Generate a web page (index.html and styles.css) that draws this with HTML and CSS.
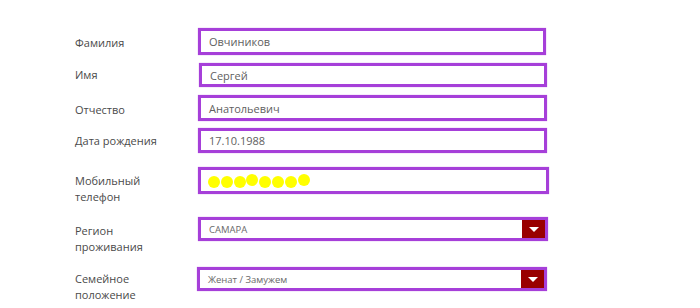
FILE: index.html
```html
<!DOCTYPE html>
<html lang="ru">

<head>
    <meta charset="UTF-8">
    <meta name="viewport" content="width=device-width, initial-scale=1.0">
    <title>Анкета</title>
    <link rel="stylesheet" href="styles.css">
</head>

<body>
    <div class="form">
        <div class="row">
            <div class="label">Фамилия</div>
            <div class="field">Овчиников</div>
        </div>
        <div class="row r-small">
            <div class="label">Имя</div>
            <div class="field f-small">Сергей</div>
        </div>
        <div class="row">
            <div class="label">Отчество</div>
            <div class="field f-mid">Анатольевич</div>
        </div>
        <div class="row r-date">
            <div class="label">Дата рождения</div>
            <div class="field f-date">17.10.1988</div>
        </div>
        <div class="row row-tall">
            <div class="label">Мобильный<br>телефон</div>
            <div class="field f-phone">
                <span class="dot"></span><span class="dot"></span><span class="dot"></span><span class="dot up"></span><span class="dot"></span><span class="dot"></span><span class="dot"></span><span class="dot up"></span>
            </div>
        </div>
        <div class="row row-tall">
            <div class="label">Регион<br>проживания</div>
            <div class="field select">
                <span class="value">САМАРА</span>
                <span class="arrow"></span>
            </div>
        </div>
        <div class="row row-tall r-last">
            <div class="label">Семейное<br>положение</div>
            <div class="field select f-shift">
                <span class="value">Женат / Замужем</span>
                <span class="arrow"></span>
            </div>
        </div>
    </div>
</body>

</html>
```

FILE: styles.css
```css
body {
    margin: 0;
    font-family: "Open Sans", Arial, sans-serif;
    background-color: #FFF;
    color: #555;
}

.form {
    padding: 28px 0 0 75px;
    display: flex;
    flex-direction: column;
    gap: 8px;
}

.row {
    display: flex;
    align-items: flex-start;
}

.label {
    width: 123px;
    font-size: 11px;
    line-height: 16px;
    padding-top: 7px;
    color: #4a4a4a;
}

.field {
    box-sizing: border-box;
    width: 348px;
    height: 27px;
    border: 3px solid #a63fd9;
    box-shadow: 0 0 1px #c98ae8;
    background-color: #FFF;
    padding-left: 8px;
    font-size: 11px;
    line-height: 21px;
    color: #5f5f5f;
    display: flex;
    align-items: center;
}

.f-small {
    height: 24px;
    margin-left: 1px;
}

.r-small .label {
    padding-top: 4px;
}

.f-mid {
    height: 26px;
    width: 349px;
}

.r-date {
    margin-top: -1px;
}

.r-date .label {
    padding-top: 5px;
}

.f-date {
    height: 25px;
    width: 349px;
}

.row-tall {
    margin-top: 6px;
    height: 38px;
}

.row-tall + .row-tall {
    margin-top: 4px;
}

.row-tall .label {
    padding-top: 6px;
}

.f-phone {
    width: 351px;
    height: 27px;
    padding-left: 7px;
}

.dot {
    width: 12px;
    height: 12px;
    border-radius: 50%;
    background-color: #ffff00;
    margin-right: 0.8px;
    margin-top: 2px;
}

.dot.up {
    margin-top: -1px;
}

.select {
    width: 350px;
    height: 24px;
    padding-left: 8px;
    padding-right: 0;
    font-size: 9.5px;
    color: #6a6a6a;
    justify-content: space-between;
    align-items: stretch;
}

.value {
    display: flex;
    align-items: center;
}

.arrow {
    width: 23px;
    background-color: #990000;
    display: flex;
    align-items: center;
    justify-content: center;
}

.arrow::after {
    content: "";
    border-left: 5px solid transparent;
    border-right: 5px solid transparent;
    border-top: 5px solid #FFF;
}

.r-last {
    margin-top: 4px;
}

.r-last .label {
    padding-top: 4px;
}

.f-shift {
    margin-left: -1px;
}
```
